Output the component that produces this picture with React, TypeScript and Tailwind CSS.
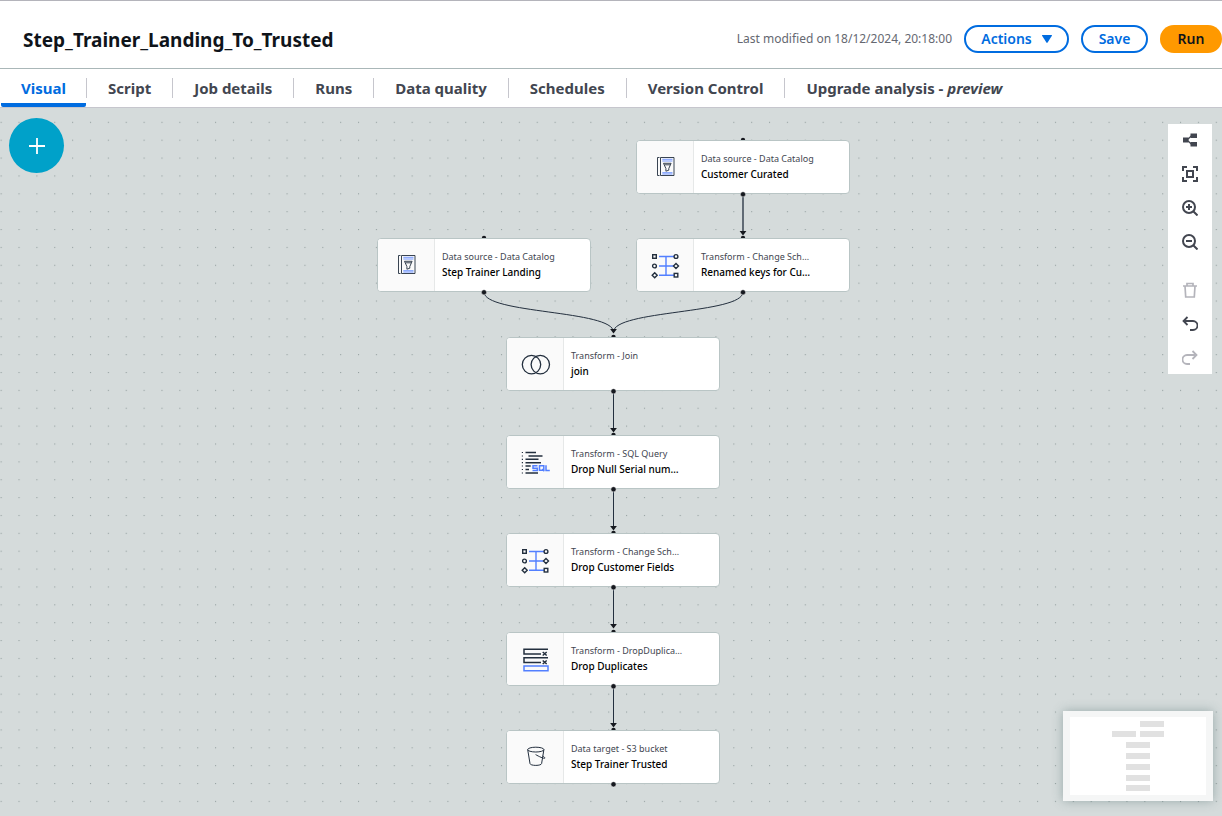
import type { ReactNode } from 'react';

type Kind = 'catalog' | 'schema' | 'join' | 'sql' | 'dedupe' | 'bucket';

type FlowNode = {
  kind: Kind;
  type: string;
  name: string;
  place: string;
};

const nodes: FlowNode[] = [
  { kind: 'catalog', type: 'Data source - Data Catalog', name: 'Customer Curated', place: 'left-[636px] top-[32px]' },
  { kind: 'catalog', type: 'Data source - Data Catalog', name: 'Step Trainer Landing', place: 'left-[377px] top-[130px]' },
  { kind: 'schema', type: 'Transform - Change Sch…', name: 'Renamed keys for Cu…', place: 'left-[636px] top-[130px]' },
  { kind: 'join', type: 'Transform - Join', name: 'join', place: 'left-[506px] top-[229px]' },
  { kind: 'sql', type: 'Transform - SQL Query', name: 'Drop Null Serial num…', place: 'left-[506px] top-[327px]' },
  { kind: 'schema', type: 'Transform - Change Sch…', name: 'Drop Customer Fields', place: 'left-[506px] top-[425px]' },
  { kind: 'dedupe', type: 'Transform - DropDuplica…', name: 'Drop Duplicates', place: 'left-[506px] top-[524px]' },
  { kind: 'bucket', type: 'Data target - S3 bucket', name: 'Step Trainer Trusted', place: 'left-[506px] top-[622px]' },
];

const tabs: ReactNode[] = [
  'Visual',
  'Script',
  'Job details',
  'Runs',
  'Data quality',
  'Schedules',
  'Version Control',
  <>
    Upgrade analysis - <em>preview</em>
  </>,
];

function NodeIcon({ kind }: { kind: Kind }) {
  const ink = '#232f3e';
  const blue = '#527fff';
  return (
    <svg width="30" height="30" viewBox="0 0 30 30" fill="none" stroke={ink} strokeWidth="1.2" aria-hidden="true">
      {kind === 'catalog' && (
        <>
          <path d="M8.5 5.500H6.500v18h2M9.500 5.500h13.500v18H9.500z" strokeWidth="0.9" />
          <path d="M11.300 7.300h10.200M11.300 9h10.200M11.300 20.700h10.200M11.300 22h10.200" stroke={blue} strokeWidth="0.8" />
          <path d="M12.500 11.300h7.600l-2.300 5.200v1.700l-2.900 1v-2.700zM13.500 12.800h5.600" strokeWidth="0.9" />
        </>
      )}
      {kind === 'schema' && (
        <>
          <path d="M8 6.500h15M8 16h15M8 25.200h15M15 6.500v18.700" stroke={blue} strokeWidth="1.400" />
          <g fill="#fafafa" strokeWidth="1.400">
            <rect x="1.700" y="4.700" width="3.600" height="3.600" />
            <circle cx="25" cy="6.500" r="1.900" />
            <circle cx="3.500" cy="16" r="1.900" />
            <path d="m25 13.500 2.500 2.500-2.500 2.500-2.500-2.500z" />
            <path d="m3.700 22.700 2.500 2.500-2.500 2.500-2.500-2.500z" />
            <rect x="23.200" y="23.400" width="3.600" height="3.600" />
          </g>
        </>
      )}
      {kind === 'join' && (
        <>
          <circle cx="10.500" cy="15.600" r="9.200" strokeWidth="1.300" />
          <circle cx="19.300" cy="15.600" r="9.200" strokeWidth="1.300" />
        </>
      )}
      {kind === 'sql' && (
        <>
          <path d="M.8 5.500H2M.8 9H2M.8 12.300H2M.8 15.700H2M.8 19H2M.8 22.500H2M.8 26H2" />
          <path
            d="M4.500 5.500H15M7.500 9h14M4.500 12.300h13M4.500 15.700H20M4.500 19h5.200M4.500 22.500h3.500M4.500 26h12.500"
            strokeWidth="1.400"
          />
          <path
            d="M16.500 18.700H12v2.500h4.300v2.400h-4.800M18.500 18.700h4.300v4.600h-4.300zM21.300 22l2 2.200M25 18.300v5.200h3.800"
            stroke={blue}
            strokeWidth="1.500"
          />
        </>
      )}
      {kind === 'dedupe' && (
        <g strokeWidth="1.500">
          <path d="M27 5.200H3v4.800h17M27 13.700H3v4.800h17" />
          <path d="m21.700 8 4 3.500M25.700 8l-4 3.500M21.700 16.500l4 3.500M25.700 16.500l-4 3.500" />
          <path d="M3 22h24v4.800H3z" stroke={blue} />
        </g>
      )}
      {kind === 'bucket' && (
        <g strokeWidth="1">
          <ellipse cx="14.800" cy="7.600" rx="8.100" ry="2.400" />
          <path d="m6.700 7.600 2.300 14c.2 1 2.500 1.800 5.800 1.800s5.600-.8 5.800-1.800l2.300-14M14.600 12.600c3 1.700 8.500 4.400 9.200 3.600.4-.5-.8-1.400-2.200-2.200" />
        </g>
      )}
    </svg>
  );
}

function NodeCard({ node }: { node: FlowNode }) {
  return (
    <button
      type="button"
      className={`absolute flex h-[54px] w-[214px] overflow-hidden rounded-[4px] border border-[#b9c5c5] bg-white text-left ${node.place}`}
    >
      <span className="flex h-full w-[57px] shrink-0 items-center justify-center border-r border-[#e6e8e8] bg-[#fafafa] pl-0.5">
        <NodeIcon kind={node.kind} />
      </span>
      <span className="flex h-full min-w-0 flex-1 flex-col justify-center pb-0.5 pl-[7px] whitespace-nowrap">
        <span className="text-[9px] leading-[15px] text-[#424650]">{node.type}</span>
        <span className="text-[10px] leading-4 font-medium text-black">{node.name}</span>
      </span>
    </button>
  );
}

const columns = [
  { x: 743, ys: [32, 130] },
  { x: 484, ys: [130] },
  { x: 613.5, ys: [229, 327, 425, 524, 622] },
];

function Edges() {
  return (
    <svg className="pointer-events-none absolute inset-0 size-full" aria-hidden="true">
      <g fill="none" stroke="#232f3e" strokeWidth="1">
        <path d="M743 86V126" strokeWidth="1.300" />
        <path d="M484 184C484 206 613.500 202 613.500 224M743 184C743 206 613.500 202 613.500 224" />
        <path d="M613.500 283V323M613.500 381V421M613.500 480V520M613.500 578V618" />
      </g>
      <g fill="#16191f">
        {[[743, 128], [613.5, 226], [613.5, 325], [613.5, 423], [613.5, 521], [613.5, 620]].map(([x, y]) => (
          <path key={y} d={`M${x - 3.4} ${y - 5}h6.8L${x} ${y - 0.5}z`} />
        ))}
      </g>
      <g fill="#16191f">
        {columns.flatMap(({ x, ys }) => ys.map((y) => <circle key={`${x}-${y}`} cx={x} cy={y} r="2.2" />))}
      </g>
    </svg>
  );
}

function Ports() {
  return (
    <svg className="pointer-events-none absolute inset-0 size-full" aria-hidden="true">
      <g fill="#16191f" stroke="#fff" strokeOpacity="0.6" strokeWidth="0.8">
        {columns.flatMap(({ x, ys }) => ys.map((y) => <circle key={`${x}-${y}`} cx={x} cy={y + 54.3} r="2.6" />))}
      </g>
    </svg>
  );
}

function Tool({ label, disabled, children }: { label: string; disabled?: boolean; children: ReactNode }) {
  return (
    <button
      type="button"
      aria-label={label}
      disabled={disabled}
      className="flex h-8 w-full items-center justify-center text-[#424650] disabled:text-[#b4b4bb]"
    >
      <svg width="16" height="16" viewBox="0 0 16 16" fill="none" stroke="currentColor" strokeWidth="2" aria-hidden="true">
        {children}
      </svg>
    </button>
  );
}

export default function App() {
  return (
    <div className="flex min-h-screen flex-col overflow-x-hidden border-t border-[#b4b4bb] bg-white font-['Noto_Sans',sans-serif]">
      <header className="flex h-[68px] items-center justify-between border-b border-[#aab7b8] pb-px pl-[23px]">
        <h1 className="pt-3 text-[19px] leading-6 font-bold text-[#0f141a]">Step_Trainer_Landing_To_Trusted</h1>
        <div className="flex items-center gap-3 pt-[10px]">
          <p className="text-[12px] leading-5 text-[#656871]">Last modified on 18/12/2024, 20:18:00</p>
          <button
            type="button"
            className="flex h-7 w-[105px] items-center justify-center gap-[10px] rounded-full border-2 border-[#006ce0] text-[14px] leading-5 font-semibold text-[#006ce0]"
          >
            Actions
            <svg width="10" height="8" viewBox="0 0 10 8" fill="currentColor" aria-hidden="true">
              <path d="M.5 0h9q.7 0 .4.700L5.600 7.500q-.6.800-1.200 0L.1.700Q-.2 0 .5 0z" />
            </svg>
          </button>
          <button
            type="button"
            className="h-7 w-[67px] rounded-full border-2 border-[#006ce0] text-[14px] leading-5 font-semibold text-[#006ce0]"
          >
            Save
          </button>
          <button type="button" className="h-7 w-[62px] rounded-full bg-[#ff9900] text-[14px] leading-5 font-semibold text-[#0f141a]">
            Run
          </button>
        </div>
      </header>

      <nav className="flex h-[39px] border-b border-[#c6c6cd] pl-px" role="tablist">
        {tabs.map((tab, i) => (
          <div key={i} className="flex items-start">
            {i > 0 && <span className="mt-[9px] h-5 w-px bg-[#c6c6cd]" />}
            <button
              type="button"
              role="tab"
              aria-selected={i === 0}
              className={
                i === 0
                  ? 'h-[38px] rounded-[2px] border-b-4 border-[#006ce0] px-5 pt-1 text-[15px] leading-5 font-bold text-[#006ce0]'
                  : 'h-[38px] border-b-4 border-transparent px-[21px] pt-1 text-[15px] leading-5 font-bold text-[#424650]'
              }
            >
              {tab}
            </button>
          </div>
        ))}
      </nav>

      <main className="relative flex-1 overflow-hidden bg-[#d5dbdb]">
        <svg className="absolute inset-0 size-full" aria-hidden="true">
          <pattern id="grid-dots" x="0.6" y="13.8" width="17.87" height="17.87" patternUnits="userSpaceOnUse">
            <rect width="1.1" height="1.1" fill="#95a1a1" />
          </pattern>
          <rect width="100%" height="100%" fill="url(#grid-dots)" />
        </svg>

        <Edges />
        {nodes.map((node) => (
          <NodeCard key={node.name} node={node} />
        ))}
        <Ports />

        <button
          type="button"
          aria-label="Add node"
          className="absolute top-[10px] left-[9px] flex size-[55px] items-center justify-center rounded-full bg-[#00a1c9]"
        >
          <svg width="16" height="16" viewBox="0 0 16 16" stroke="#fff" strokeWidth="1.800" aria-hidden="true">
            <path d="M8 0v16M0 8h16" />
          </svg>
        </button>

        <div className="absolute top-4 right-[10px] flex w-11 flex-col gap-0.5 bg-white" role="toolbar" aria-label="Canvas tools">
          <Tool label="Arrange">
            <path d="M1 5.500h5.500v5H1zM8.500 1.500H15v4.500H8.500zM8.500 10H15v4.500H8.500z" fill="currentColor" stroke="none" />
            <path d="M9.500 3.700 5 8l4.500 4.300" strokeWidth="1.200" />
          </Tool>
          <Tool label="Fit to screen">
            <path d="M1 5V1h4M11 1h4v4M15 11v4h-4M5 15H1v-4M5 5h6v6H5z" />
          </Tool>
          <Tool label="Zoom in">
            <circle cx="7" cy="7" r="6" />
            <path d="m11.500 11.500 4 4M7 4v6M4 7h6" />
          </Tool>
          <Tool label="Zoom out">
            <circle cx="7" cy="7" r="6" />
            <path d="m11.500 11.500 4 4M4 7h6" />
          </Tool>
          <div className="mt-[14px] flex flex-col gap-0.5">
            <Tool label="Delete" disabled>
              <path d="M1 4h14M5 4V1.500h6V4M3 4l.7 11h8.600L13 4" strokeWidth="1.700" />
            </Tool>
            <Tool label="Undo">
              <path d="M5.500 1 1.500 5l4 4M1.500 5H11a4.500 4.500 0 0 1 0 9H8" strokeWidth="1.800" />
            </Tool>
            <Tool label="Redo" disabled>
              <path d="m10.500 1 4 4-4 4M14.500 5H5a4.500 4.500 0 0 0 0 9h3" strokeWidth="1.800" />
            </Tool>
          </div>
        </div>

        <div className="absolute right-[9px] bottom-[15px] h-[90px] w-[150px] bg-[#f5f6f6] px-[7px] py-1.5 shadow-[0_0_10px_rgba(80,110,110,0.45)]">
          <svg className="size-full bg-white" viewBox="0 0 136 78" fill="#e1e1e1" role="img" aria-label="Canvas overview">
            <path d="M70 4h24v6H70zM42 14h24v6H42zM70 14h24v6H70zM56 25h24v6H56zM56 36h24v6H56zM56 47h24v6H56zM56 58h24v6H56zM56 68h24v6H56z" />
          </svg>
        </div>
      </main>
    </div>
  );
}
